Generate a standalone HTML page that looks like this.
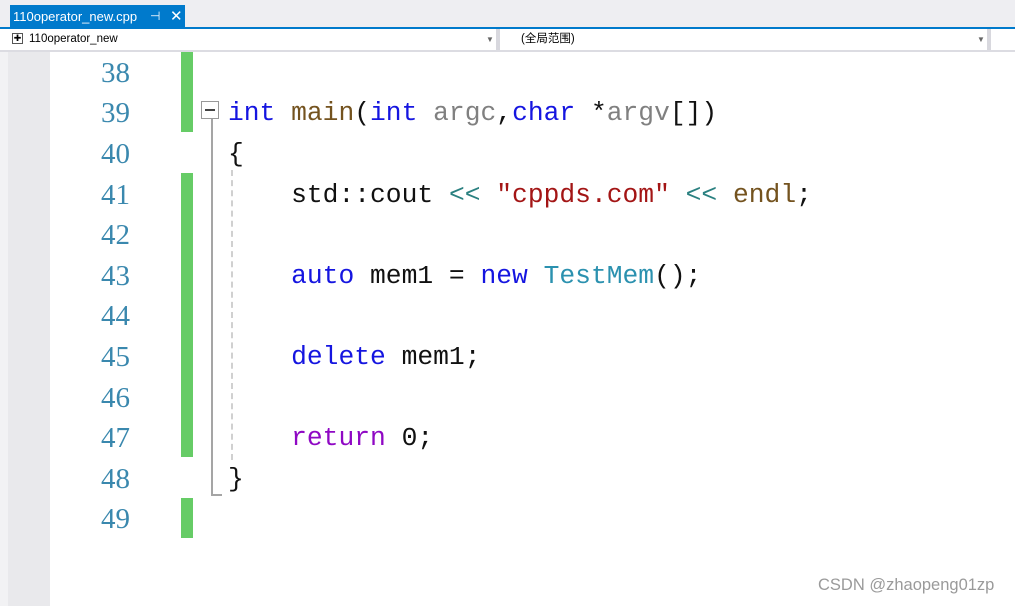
<!DOCTYPE html>
<html><head><meta charset="utf-8"><style>
body{margin:0;width:1015px;height:606px;overflow:hidden;background:#fff;position:relative;font-family:"Liberation Sans",sans-serif}
.top{position:absolute;left:0;top:0;width:1015px;height:27px;background:#eeeef2}
.tab{position:absolute;left:10px;top:5px;width:175px;height:23px;background:#007acc;color:#fff;font-size:13px;line-height:23px}
.bl{position:absolute;left:0;top:27px;width:1015px;height:2px;background:#007acc}
.bar{position:absolute;left:0;top:29px;width:1015px;height:21px;background:#fff;border-bottom:2px solid #dcdce2;font-size:11.5px;line-height:21px}
.left{position:absolute;left:0;top:52px;width:50px;height:554px;background:#e9e9ec;border-left:8px solid #f2f2f4;box-sizing:border-box}
.ln{position:absolute;left:60px;width:70px;text-align:right;font-family:"Liberation Serif",serif;font-size:29px;color:#3a88ae;height:40.6px;line-height:40.6px}
.g{position:absolute;left:181px;width:12px;background:#66cc66}
pre{position:absolute;left:228px;margin:0;font-family:"Liberation Mono",monospace;font-size:26.3px;height:40.6px;line-height:40.6px;color:#111}
.k{color:#1515e0}.f{color:#74531f}.p{color:#808080}.s{color:#a31515}.t{color:#2b91af}.o{color:#2a8080}.r{color:#8f08c4}
</style></head><body>
<div class="top"></div>
<div class="tab"><span style="margin-left:3px">110operator_new.cpp</span><span style="position:absolute;left:140px;font-size:12px">⊣</span><span style="position:absolute;left:160px;font-size:15px">✕</span></div>
<div class="bl"></div>
<div class="bar">
<div style="position:absolute;left:12px;top:4px;width:11px;height:11px;border:1px solid #555;box-sizing:border-box;font-size:9px;line-height:9px;text-align:center">✚</div>
<span style="position:absolute;left:29px">110operator_new</span>
<span style="position:absolute;left:486px;font-size:8px;color:#666">▼</span>
<div style="position:absolute;left:496px;top:0;width:4px;height:21px;background:#d8d8de"></div>
<span style="position:absolute;left:521px;font-family:'Liberation Sans','Noto Sans CJK SC',sans-serif">(全局范围)</span>
<span style="position:absolute;left:977px;font-size:8px;color:#666">▼</span>
<div style="position:absolute;left:987px;top:0;width:4px;height:21px;background:#d8d8de"></div>
</div>
<div class="left"></div>
<div class="ln" style="top:52.7px">38</div>
<div class="ln" style="top:93.3px">39</div>
<div class="ln" style="top:133.9px">40</div>
<div class="ln" style="top:174.5px">41</div>
<div class="ln" style="top:215.1px">42</div>
<div class="ln" style="top:255.7px">43</div>
<div class="ln" style="top:296.3px">44</div>
<div class="ln" style="top:336.9px">45</div>
<div class="ln" style="top:377.5px">46</div>
<div class="ln" style="top:418.1px">47</div>
<div class="ln" style="top:458.7px">48</div>
<div class="ln" style="top:499.3px">49</div>
<div class="g" style="top:52px;height:80px"></div>
<div class="g" style="top:173px;height:284px"></div>
<div class="g" style="top:498px;height:40px"></div>
<div style="position:absolute;left:201px;top:101px;width:18px;height:18px;border:1px solid #999;box-sizing:border-box"><div style="position:absolute;left:3px;top:7px;width:10px;height:2px;background:#444"></div></div>
<div style="position:absolute;left:211px;top:119px;width:2px;height:377px;background:#a5a5a5"></div>
<div style="position:absolute;left:211px;top:494px;width:11px;height:2px;background:#a5a5a5"></div>
<div style="position:absolute;left:231px;top:170px;width:0;height:290px;border-left:2px dashed #d0d0d0"></div>
<pre style="top:93.3px"><span class="k">int</span> <span class="f">main</span>(<span class="k">int</span> <span class="p">argc</span>,<span class="k">char</span> *<span class="p">argv</span>[])</pre>
<pre style="top:133.9px">{</pre>
<pre style="top:174.5px">    std::cout <span class="o">&lt;&lt;</span> <span class="s">"cppds.com"</span> <span class="o">&lt;&lt;</span> <span class="f">endl</span>;</pre>
<pre style="top:255.7px">    <span class="k">auto</span> mem1 = <span class="k">new</span> <span class="t">TestMem</span>();</pre>
<pre style="top:336.9px">    <span class="k">delete</span> mem1;</pre>
<pre style="top:418.1px">    <span class="r">return</span> 0;</pre>
<pre style="top:458.7px">}</pre>
<div style="position:absolute;left:818px;top:576px;font-size:16.5px;color:#9a9a9a">CSDN @zhaopeng01zp</div>
</body></html>
